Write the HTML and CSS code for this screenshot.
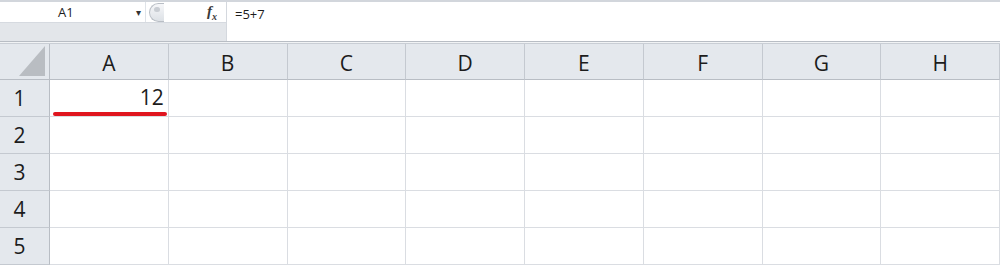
FILE: index.html
```html
<!DOCTYPE html>
<html lang="en">
<head>
    <meta charset="UTF-8">
    <title>Sheet</title>
    <link rel="stylesheet" href="styles.css">
</head>
<body>
    <div class="toolbar">
        <div class="left-pane">
            <div class="name-row">
                <div class="name-box">
                    <span class="cell-ref">A1</span>
                    <span class="caret">&#9662;</span>
                </div>
                <div class="splitter"><span class="knob"><span class="dot"></span></span></div>
                <div class="fx"><i>f</i><sub>x</sub></div>
            </div>
            <div class="left-fill"></div>
        </div>
        <div class="formula">=5+7</div>
    </div>
    <div class="divider"></div>

    <div class="grid">
        <div class="corner"><span class="tri"></span></div>
        <div class="col-head">A</div>
        <div class="col-head">B</div>
        <div class="col-head">C</div>
        <div class="col-head">D</div>
        <div class="col-head">E</div>
        <div class="col-head">F</div>
        <div class="col-head">G</div>
        <div class="col-head">H</div>

        <div class="row-head">1</div>
        <div class="cell num">12<span class="mark"></span></div>
        <div class="cell"></div><div class="cell"></div><div class="cell"></div>
        <div class="cell"></div><div class="cell"></div><div class="cell"></div><div class="cell"></div>

        <div class="row-head">2</div>
        <div class="cell"></div><div class="cell"></div><div class="cell"></div><div class="cell"></div>
        <div class="cell"></div><div class="cell"></div><div class="cell"></div><div class="cell"></div>

        <div class="row-head">3</div>
        <div class="cell"></div><div class="cell"></div><div class="cell"></div><div class="cell"></div>
        <div class="cell"></div><div class="cell"></div><div class="cell"></div><div class="cell"></div>

        <div class="row-head">4</div>
        <div class="cell"></div><div class="cell"></div><div class="cell"></div><div class="cell"></div>
        <div class="cell"></div><div class="cell"></div><div class="cell"></div><div class="cell"></div>

        <div class="row-head">5</div>
        <div class="cell"></div><div class="cell"></div><div class="cell"></div><div class="cell"></div>
        <div class="cell"></div><div class="cell"></div><div class="cell"></div><div class="cell"></div>
    </div>
</body>
</html>
```

FILE: styles.css
```css
* {
    box-sizing: border-box;
}

body {
    margin: 0;
    background-color: #fff;
    font-family: "Open Sans", "Liberation Sans", sans-serif;
    color: #1c1c1c;
    overflow: hidden;
}

.toolbar {
    display: flex;
    height: 41px;
    border-top: 2px solid #d2d6dc;
    background-color: #fff;
}

.left-pane {
    width: 227px;
    display: flex;
    flex-direction: column;
    border-right: 1px solid #d4d8de;
}

.name-row {
    display: flex;
    align-items: center;
    height: 20px;
}

.name-box {
    width: 146px;
    height: 20px;
    display: flex;
    align-items: center;
    border-right: 1px solid #dfe3e8;
}

.cell-ref {
    flex: 1;
    padding-left: 58px;
    font-size: 13px;
}

.caret {
    font-size: 10px;
    color: #333;
    margin-right: 4px;
}

.splitter {
    width: 22px;
    height: 20px;
    display: flex;
    align-items: center;
    padding-left: 3px;
}

.knob {
    width: 15px;
    height: 19px;
    border-radius: 10px 0 0 10px;
    border: 1px solid #b9bec5;
    border-right: none;
    background: linear-gradient(#f6f7f9, #dde1e6);
    display: flex;
    align-items: center;
    justify-content: center;
}

.dot {
    width: 6px;
    height: 5px;
    border-radius: 3px;
    background-color: #c9cdd3;
    margin-bottom: 5px;
}

.fx {
    flex: 1;
    text-align: right;
    padding-right: 9px;
    font-family: "Liberation Serif", serif;
    font-size: 15px;
    font-weight: bold;
    color: #3a3a3a;
}

.fx sub {
    font-size: 10px;
    font-style: italic;
}

.left-fill {
    flex: 1;
    background-color: #e3e6ea;
    border-top: 1px solid #d6dae0;
}

.formula {
    flex: 1;
    padding: 3px 0 0 8px;
    font-size: 13px;
}

.divider {
    height: 3px;
    border-top: 1px solid #b8bdc4;
    border-bottom: 1px solid #c9ced5;
    background-color: #f1f3f5;
}

.grid {
    display: grid;
    grid-template-columns: 50px repeat(8, 1fr);
    grid-template-rows: 36px repeat(5, 37px);
}

.corner {
    background-color: #e4e8ed;
    border-right: 1px solid #b8bdc4;
    border-bottom: 1px solid #b8bdc4;
    position: relative;
}

.tri {
    position: absolute;
    right: 4px;
    bottom: 3px;
    width: 0;
    height: 0;
    border-left: 26px solid transparent;
    border-bottom: 30px solid #b9bdc2;
}

.col-head {
    background-color: #e4e8ed;
    border-right: 1px solid #c4c9d0;
    border-bottom: 1px solid #b8bdc4;
    display: flex;
    align-items: center;
    justify-content: center;
    font-size: 21px;
    padding-top: 2px;
}

.row-head {
    background-color: #e4e8ed;
    border-right: 1px solid #b8bdc4;
    border-bottom: 1px solid #c4c9d0;
    display: flex;
    align-items: center;
    justify-content: center;
    font-size: 21px;
    padding-right: 10px;
}

.cell {
    border-right: 1px solid #dadde2;
    border-bottom: 1px solid #dadde2;
}

.num {
    position: relative;
    text-align: right;
    font-size: 21px;
    line-height: 34px;
    padding-right: 4px;
}

.mark {
    position: absolute;
    left: 3px;
    right: 1px;
    bottom: 0;
    height: 4px;
    border-radius: 2px;
    background-color: #e0151f;
}
```
